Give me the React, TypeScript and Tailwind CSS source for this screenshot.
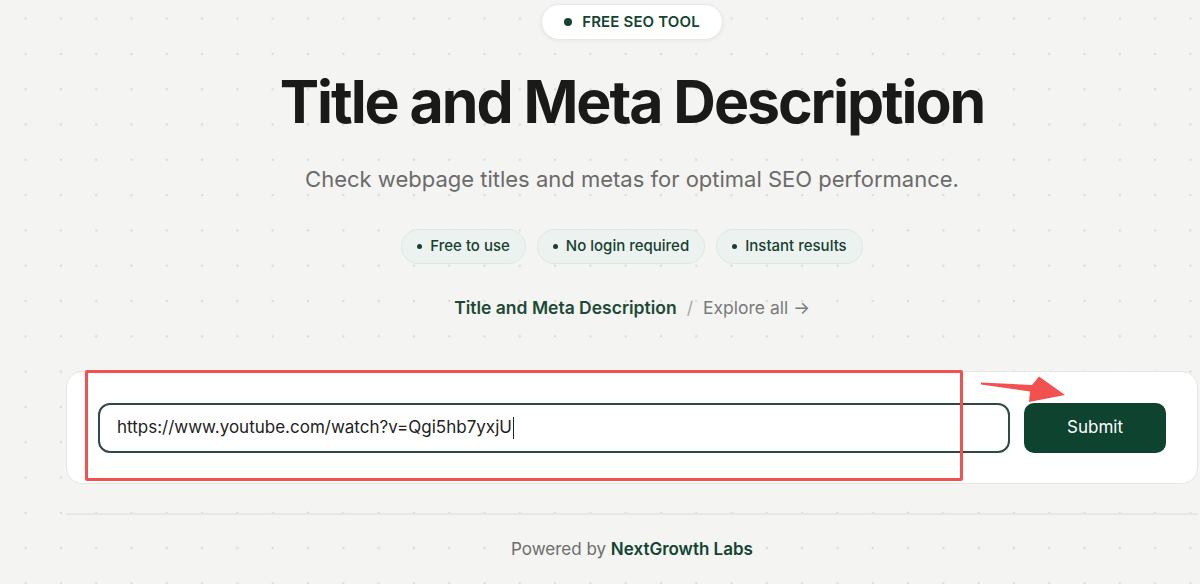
import React from 'react';

const pills = ['Free to use', 'No login required', 'Instant results'];

const App = () => {
  return (
    <div
      className="w-[1200px] h-[584px] overflow-hidden bg-[#f4f4f3] bg-[radial-gradient(circle,#dadada_1.1px,transparent_1.6px)] bg-[size:35.3px_35.3px] bg-[position:8px_1px] font-['Inter',sans-serif]"
    >
      <div className="ml-[66px] w-[1132px] flex flex-col items-center">
        <div className="mt-[4px] h-[36px] px-[22px] flex items-center gap-[10px] bg-white rounded-full border border-[#e6e9e7] shadow-[0_1px_4px_rgba(0,0,0,0.06)]">
          <span className="w-[8px] h-[8px] rounded-full bg-[#134530]" />
          <span className="text-[15px] font-semibold text-[#134530] tracking-[0.01em]">FREE SEO TOOL</span>
        </div>

        <h1 className="mt-[26px] text-[59px] leading-[72px] font-bold tracking-[-0.035em] text-[#1a1a18]">
          Title and Meta Description
        </h1>

        <p className="mt-[26px] text-[22px] leading-[30px] text-[#6b6b69]">
          Check webpage titles and metas for optimal SEO performance.
        </p>

        <div className="mt-[35px] flex gap-[11px]">
          {pills.map((p) => (
            <div
              key={p}
              className="h-[35px] px-[15px] flex items-center gap-[8px] rounded-full bg-[#ecf2ef] border border-[#dfe7e3]"
            >
              <span className="w-[5px] h-[5px] rounded-full bg-[#17402f]" />
              <span className="text-[15px] font-medium text-[#17402f]">{p}</span>
            </div>
          ))}
        </div>

        <div className="mt-[31px] flex items-center gap-[10px] text-[17.5px]">
          <span className="font-semibold text-[#1d4a35]">Title and Meta Description</span>
          <span className="text-[#a7a7a5]">/</span>
          <span className="text-[#7a7a78]">Explore all →</span>
        </div>

        <div className="relative mt-[50px] w-full h-[113px] bg-white rounded-[16px] border border-[#e5e6e5] flex items-center gap-[14px] pl-[31px] pr-[31px]">
          <div className="flex-1 h-[50px] rounded-[12px] border-2 border-[#2f4b3e] flex items-center pl-[17px] text-[17px] text-[#222]">
            https://www.youtube.com/watch?v=Qgi5hb7yxjU
            <span className="ml-[1px] w-[1px] h-[22px] bg-[#222]" />
          </div>
          <button className="w-[142px] h-[50px] rounded-[10px] bg-[#0e4330] text-white text-[17px]">
            Submit
          </button>
          <div className="absolute left-[18px] top-[-2px] w-[878px] h-[111px] border-[3px] border-[#f2524f] rounded-[2px]" />
          <svg className="absolute left-[900px] top-0" width="110" height="40" viewBox="900 0 110 40">
            <polygon points="914,10.5 965,13 972,4.5 998,23 962,30 963,19.5 914,12.5" fill="#f2524f" />
          </svg>
        </div>

        <div className="mt-[29px] w-full h-[2px] bg-[#e3e9e5]" />

        <div className="mt-[22px] text-[17px]">
          <span className="text-[#6d6d6b]">Powered by </span>
          <span className="font-semibold text-[#134530]">NextGrowth Labs</span>
        </div>
      </div>
    </div>
  );
};

export default App;
